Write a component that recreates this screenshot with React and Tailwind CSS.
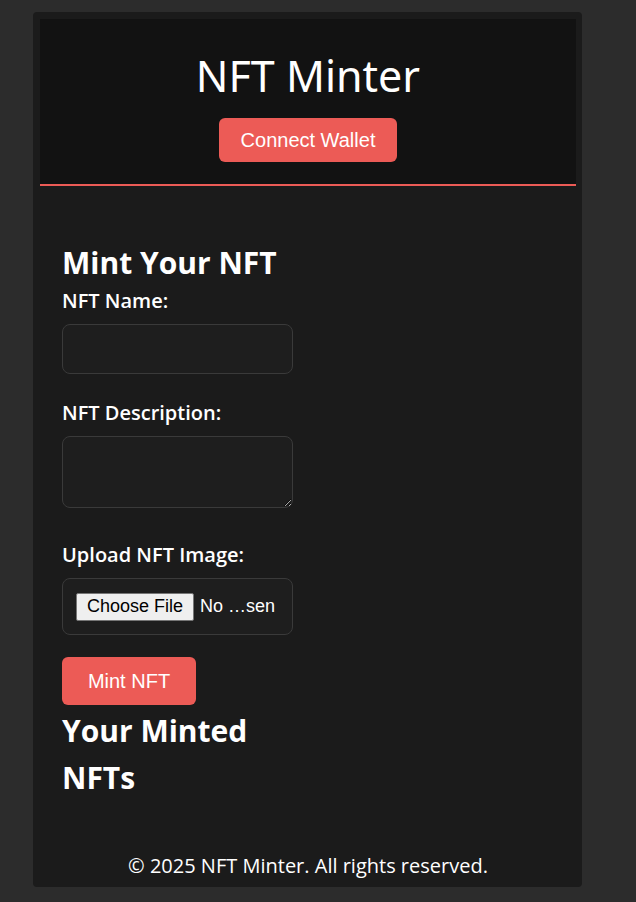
export default function App() {
  return (
    <div className="min-h-screen bg-[#2c2c2c] pt-[12px] pb-[15px] font-['Open_Sans',sans-serif] text-white">
      <div className="ml-[33px] w-[549px] h-[875px] rounded bg-[#1b1b1b] px-[7px] pt-[7px] pr-[6px] flex flex-col">
        {/* Header */}
        <header className="bg-[#121212] border-b-2 border-[#ec5b56] pt-[32px] pb-[22px] flex flex-col items-center">
          <h1 className="text-[43px] leading-[50px] font-['Noto_Sans',sans-serif] font-normal">NFT Minter</h1>
          <button className="mt-[17px] h-[44px] w-[178px] rounded-md bg-[#ec5b56] font-['Liberation_Sans',sans-serif] text-[20px] text-white">
            Connect Wallet
          </button>
        </header>

        {/* Form */}
        <main className="px-[22px] pt-[53px] w-[275px]">
          <h2 className="text-[30px] leading-[48px] font-bold">Mint Your NFT</h2>
          <label className="block text-[20px] leading-[28px] font-semibold">NFT Name:</label>
          <input className="mt-[9px] block h-[50px] w-[231px] rounded-lg border border-[#3a3a3a] bg-[#1e1e1e] outline-none" />

          <label className="mt-[25px] block text-[20px] leading-[28px] font-semibold">NFT Description:</label>
          <textarea className="mt-[9px] block h-[72px] w-[231px] rounded-lg border border-[#3a3a3a] bg-[#1e1e1e] outline-none" />

          <label className="mt-[33px] block text-[20px] leading-[28px] font-semibold">Upload NFT Image:</label>
          <div className="mt-[9px] h-[57px] w-[231px] rounded-lg border border-[#3a3a3a] bg-[#1e1e1e] flex items-center pl-[13px] font-['Liberation_Sans',sans-serif] text-[18px]">
            <span className="h-[28px] w-[118px] flex items-center justify-center rounded-[2px] border border-[#767676] bg-[#efefef] text-black">
              Choose File
            </span>
            <span className="ml-[6px]">No …sen</span>
          </div>

          <button className="mt-[22px] h-[48px] w-[134px] rounded-md bg-[#ec5b56] font-['Liberation_Sans',sans-serif] text-[20px] text-white">
            Mint NFT
          </button>

          <h2 className="mt-[2px] text-[30px] leading-[47px] font-bold">Your Minted NFTs</h2>
        </main>

        {/* Footer */}
        <footer className="mt-auto pb-[6px] text-center text-[20px] leading-[30px]">
          © 2025 NFT Minter. All rights reserved.
        </footer>
      </div>
    </div>
  );
}
